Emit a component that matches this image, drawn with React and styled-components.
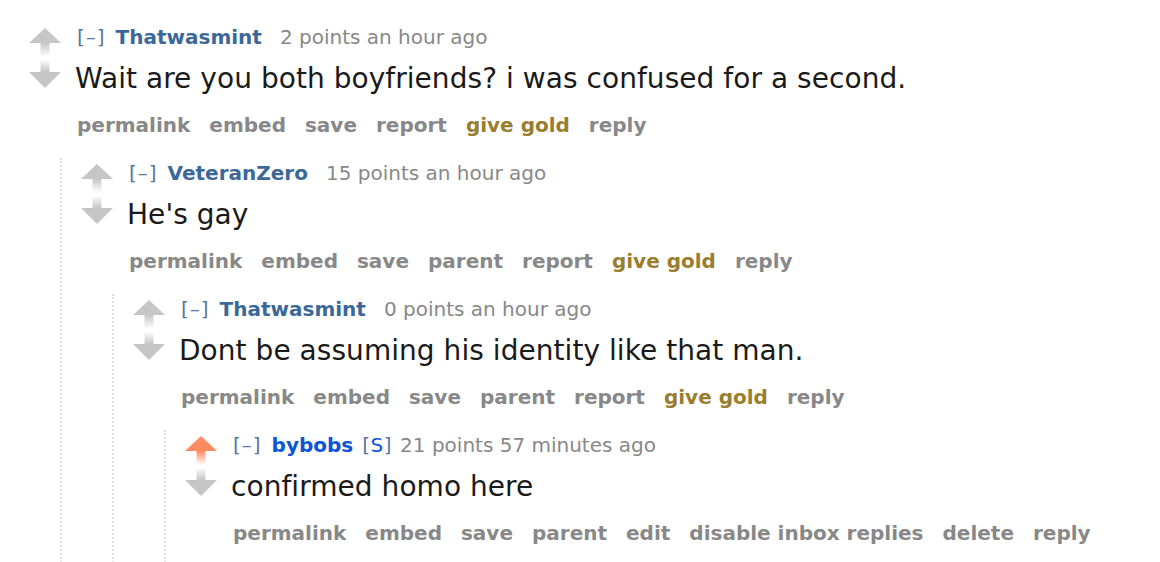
import React from "react";
import styled, { createGlobalStyle } from "styled-components";

const GlobalStyle = createGlobalStyle`
  html, body {
    margin: 0;
    padding: 0;
    background: #fff;
  }
  body {
    font-family: "DejaVu Sans", Verdana, sans-serif;
  }
`;

const Page = styled.div`
  width: 1160px;
  height: 562px;
  overflow: hidden;
  padding: 26px 0 0 10px;
  box-sizing: border-box;
  background: #fff;
`;

const CommentBox = styled.div`
  display: flex;
  flex-direction: column;
`;

const Row = styled.div`
  display: flex;
  align-items: flex-start;
`;

const Midcol = styled.div`
  display: flex;
  flex-direction: column;
  gap: 5px;
  width: 32px;
  margin: 2px 0 0 19px;
  flex-shrink: 0;
`;

const Entry = styled.div`
  margin-left: 16px;
  display: flex;
  flex-direction: column;
`;

const Tagline = styled.div`
  display: flex;
  align-items: baseline;
  font-size: 20px;
  line-height: 22px;
  color: #888;
  white-space: nowrap;
`;

const Expand = styled.span`
  color: #5a77a0;
  letter-spacing: 1px;
  margin-right: 10px;
`;

const Author = styled.span`
  font-weight: bold;
  color: ${({ $op }) => ($op ? "#0a55d8" : "#3b6898")};
  margin-right: ${({ $op }) => ($op ? "9px" : "18px")};
`;

const Flair = styled.span`
  color: #5a77a0;
  letter-spacing: 0.5px;
  margin-right: 8px;
  & b {
    font-weight: normal;
    color: #0a55d8;
  }
`;

const Body = styled.div`
  font-size: 28px;
  line-height: 36px;
  color: #1a1a1a;
  margin: 13px 0 0 -2px;
  letter-spacing: 0.05px;
  white-space: nowrap;
`;

const Buttons = styled.ul`
  display: flex;
  gap: 19px;
  list-style: none;
  margin: 17px 0 0;
  padding: 0;
  font-size: 20px;
  line-height: 22px;
  font-weight: bold;
  white-space: nowrap;
`;

const Btn = styled.li`
  color: ${({ $gold }) => ($gold ? "#9a7d2e" : "#888")};
`;

const Child = styled.div`
  margin: 22px 0 0 50px;
  padding-top: 4px;
  border-left: 2px dotted #dcdce6;
  min-height: 600px;
`;

const ArrowSvg = styled.svg`
  display: block;
`;

const UpArrow = ({ id, on }) => {
  const c = on ? "#ff8b60" : "#c6c6c6";
  return (
    <ArrowSvg width="32" height="28" viewBox="0 0 32 28">
      <defs>
        <linearGradient id={id} x1="0" y1="0" x2="0" y2="1">
          <stop offset="0" stopColor={c} />
          <stop offset="1" stopColor={c} stopOpacity="0.05" />
        </linearGradient>
      </defs>
      <polygon points="16,0 32,15 0,15" fill={c} />
      <rect x="11.5" y="15" width="9" height="13" fill={`url(#${id})`} />
    </ArrowSvg>
  );
};

const DownArrow = ({ id }) => (
  <ArrowSvg width="32" height="28" viewBox="0 0 32 28">
    <defs>
      <linearGradient id={id} x1="0" y1="0" x2="0" y2="1">
        <stop offset="0" stopColor="#c6c6c6" stopOpacity="0.15" />
        <stop offset="1" stopColor="#c6c6c6" />
      </linearGradient>
    </defs>
    <rect x="11.5" y="0" width="9" height="11" fill={`url(#${id})`} />
    <polygon points="0,11 32,11 16,27" fill="#c6c6c6" />
  </ArrowSvg>
);

const Comment = ({ data, idx, children }) => (
  <CommentBox>
    <Row>
      <Midcol>
        <UpArrow id={`up${idx}`} on={data.voted} />
        <DownArrow id={`down${idx}`} />
      </Midcol>
      <Entry>
        <Tagline>
          <Expand>[–]</Expand>
          <Author $op={data.op}>{data.author}</Author>
          {data.op && (
            <Flair>
              [<b>S</b>]
            </Flair>
          )}
          <span>
            {data.points} points {data.time}
          </span>
        </Tagline>
        <Body>{data.text}</Body>
        <Buttons>
          {data.buttons.map((b) => (
            <Btn key={b} $gold={b === "give gold"}>
              {b}
            </Btn>
          ))}
        </Buttons>
      </Entry>
    </Row>
    {children && <Child>{children}</Child>}
  </CommentBox>
);

const thread = [
  {
    author: "Thatwasmint",
    points: 2,
    time: "an hour ago",
    text: "Wait are you both boyfriends? i was confused for a second.",
    buttons: ["permalink", "embed", "save", "report", "give gold", "reply"],
  },
  {
    author: "VeteranZero",
    points: 15,
    time: "an hour ago",
    text: "He's gay",
    buttons: ["permalink", "embed", "save", "parent", "report", "give gold", "reply"],
  },
  {
    author: "Thatwasmint",
    points: 0,
    time: "an hour ago",
    text: "Dont be assuming his identity like that man.",
    buttons: ["permalink", "embed", "save", "parent", "report", "give gold", "reply"],
  },
  {
    author: "bybobs",
    op: true,
    voted: true,
    points: 21,
    time: "57 minutes ago",
    text: "confirmed homo here",
    buttons: ["permalink", "embed", "save", "parent", "edit", "disable inbox replies", "delete", "reply"],
  },
];

const renderThread = (i) =>
  i >= thread.length ? null : (
    <Comment data={thread[i]} idx={i}>
      {renderThread(i + 1)}
    </Comment>
  );

export default function App() {
  return (
    <>
      <GlobalStyle />
      <Page>{renderThread(0)}</Page>
    </>
  );
}
